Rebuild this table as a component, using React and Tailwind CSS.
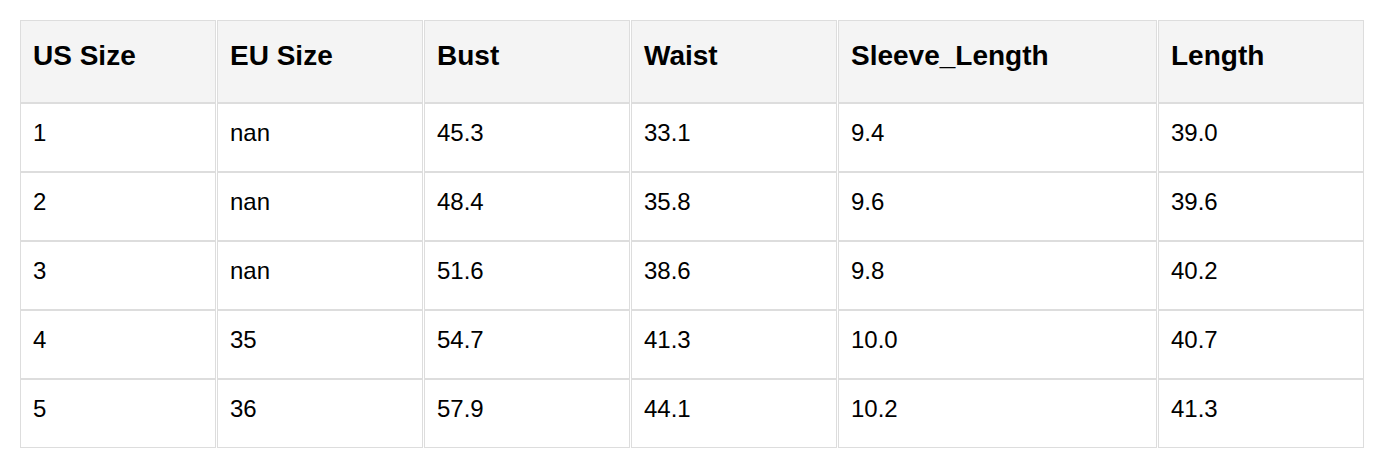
const COLUMNS = [
  { key: 'us', label: 'US Size', w: 'w-[196px]' },
  { key: 'eu', label: 'EU Size', w: 'w-[206px]' },
  { key: 'bust', label: 'Bust', w: 'w-[206px]' },
  { key: 'waist', label: 'Waist', w: 'w-[206px]' },
  { key: 'sleeve', label: 'Sleeve_Length', w: 'w-[319px]' },
  { key: 'length', label: 'Length', w: 'w-[206px]' },
]

const ROWS = [
  ['1', 'nan', '45.3', '33.1', '9.4', '39.0'],
  ['2', 'nan', '48.4', '35.8', '9.6', '39.6'],
  ['3', 'nan', '51.6', '38.6', '9.8', '40.2'],
  ['4', '35', '54.7', '41.3', '10.0', '40.7'],
  ['5', '36', '57.9', '44.1', '10.2', '41.3'],
]

export default function App() {
  return (
    <div className="min-h-[467px] bg-white pl-[19px] pt-[20px] font-['Liberation_Sans',Arial,sans-serif] text-black">
      <table className="table-fixed border-separate border-spacing-x-px border-spacing-y-0">
        <thead>
          <tr>
            {COLUMNS.map((c) => (
              <th
                key={c.key}
                className={`${c.w} h-[83px] border border-[#dddddd] bg-[#f4f4f4] px-3 pt-[14px] text-left align-top text-[28px] font-bold leading-normal`}
              >
                {c.label}
              </th>
            ))}
          </tr>
        </thead>
        <tbody>
          {ROWS.map((row, i) => (
            <tr key={i}>
              {row.map((v, j) => (
                <td
                  key={j}
                  className="h-[69px] border border-[#dddddd] px-3 pt-[11px] align-top text-[24px] leading-normal"
                >
                  {v}
                </td>
              ))}
            </tr>
          ))}
        </tbody>
      </table>
    </div>
  )
}
